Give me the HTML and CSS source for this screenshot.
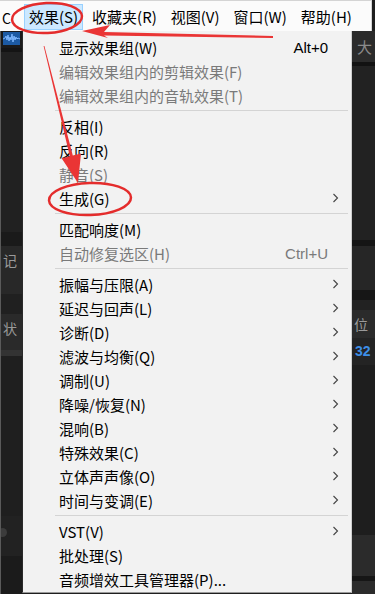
FILE: index.html
```html
<!DOCTYPE html>
<html lang="zh">

<head>
    <meta charset="UTF-8">
    <meta name="viewport" content="width=device-width, initial-scale=1.0">
    <title>效果菜单</title>
    <link rel="stylesheet" href="styles.css">
</head>

<body>
    <div class="app">
        <div class="menubar">
            <span class="bar-stub">C</span>
            <span class="bar-item active">效果(S)</span>
            <span class="bar-item">收藏夹(R)</span>
            <span class="bar-item">视图(V)</span>
            <span class="bar-item">窗口(W)</span>
            <span class="bar-item">帮助(H)</span>
        </div>

        <div class="workspace">
            <div class="side side-left">
                <div class="band band-icon">
                    <svg class="wave" width="17" height="13" viewBox="0 0 17 13">
                        <rect width="17" height="13" fill="#1c5aa3" />
                        <polyline points="0,7 2,6 3,4 4,8 5,3 6,9 7,5 8,8 9,2 10,10 11,4 12,8 13,5 14,7 15,6 17,7"
                            fill="none" stroke="#7fb8ff" stroke-width="1" />
                    </svg>
                </div>
                <div class="band" style="height:4px;background:#141414"></div>
                <div class="band" style="height:180px;background:#212121"></div>
                <div class="band" style="height:14px;background:#1a1a1a"></div>
                <div class="band band-text" style="height:48px;background:#282828">记</div>
                <div class="band" style="height:20px;background:#202020"></div>
                <div class="band band-text" style="height:36px;background:#2a2a2a">状</div>
                <div class="band" style="height:6px;background:#333"></div>
                <div class="band" style="height:160px;background:#1f1f1f"></div>
                <div class="band band-dot" style="height:40px;background:#222"><span class="dot"></span></div>
                <div class="band" style="height:60px;background:#1b1b1b"></div>
            </div>

            <div class="dropdown">
                <div class="item"><span class="label">显示效果组(W)</span><span class="key">Alt+0</span><span class="arrow"></span></div>
                <div class="item disabled"><span class="label">编辑效果组内的剪辑效果(F)</span><span class="arrow"></span></div>
                <div class="item disabled"><span class="label">编辑效果组内的音轨效果(T)</span><span class="arrow"></span></div>
                <div class="sep"></div>
                <div class="item"><span class="label">反相(I)</span><span class="arrow"></span></div>
                <div class="item"><span class="label">反向(R)</span><span class="arrow"></span></div>
                <div class="item disabled"><span class="label">静音(S)</span><span class="arrow"></span></div>
                <div class="item sub"><span class="label">生成(G)</span><span class="arrow"><svg width="6" height="10" viewBox="0 0 6 10"><polyline points="0.5,1 4.5,5 0.5,9" /></svg></span></div>
                <div class="sep"></div>
                <div class="item"><span class="label">匹配响度(M)</span><span class="arrow"></span></div>
                <div class="item disabled"><span class="label">自动修复选区(H)</span><span class="key">Ctrl+U</span><span class="arrow"></span></div>
                <div class="sep"></div>
                <div class="item sub"><span class="label">振幅与压限(A)</span><span class="arrow"><svg width="6" height="10" viewBox="0 0 6 10"><polyline points="0.5,1 4.5,5 0.5,9" /></svg></span></div>
                <div class="item sub"><span class="label">延迟与回声(L)</span><span class="arrow"><svg width="6" height="10" viewBox="0 0 6 10"><polyline points="0.5,1 4.5,5 0.5,9" /></svg></span></div>
                <div class="item sub"><span class="label">诊断(D)</span><span class="arrow"><svg width="6" height="10" viewBox="0 0 6 10"><polyline points="0.5,1 4.5,5 0.5,9" /></svg></span></div>
                <div class="item sub"><span class="label">滤波与均衡(Q)</span><span class="arrow"><svg width="6" height="10" viewBox="0 0 6 10"><polyline points="0.5,1 4.5,5 0.5,9" /></svg></span></div>
                <div class="item sub"><span class="label">调制(U)</span><span class="arrow"><svg width="6" height="10" viewBox="0 0 6 10"><polyline points="0.5,1 4.5,5 0.5,9" /></svg></span></div>
                <div class="item sub"><span class="label">降噪/恢复(N)</span><span class="arrow"><svg width="6" height="10" viewBox="0 0 6 10"><polyline points="0.5,1 4.5,5 0.5,9" /></svg></span></div>
                <div class="item sub"><span class="label">混响(B)</span><span class="arrow"><svg width="6" height="10" viewBox="0 0 6 10"><polyline points="0.5,1 4.5,5 0.5,9" /></svg></span></div>
                <div class="item sub"><span class="label">特殊效果(C)</span><span class="arrow"><svg width="6" height="10" viewBox="0 0 6 10"><polyline points="0.5,1 4.5,5 0.5,9" /></svg></span></div>
                <div class="item sub"><span class="label">立体声声像(O)</span><span class="arrow"><svg width="6" height="10" viewBox="0 0 6 10"><polyline points="0.5,1 4.5,5 0.5,9" /></svg></span></div>
                <div class="item sub"><span class="label">时间与变调(E)</span><span class="arrow"><svg width="6" height="10" viewBox="0 0 6 10"><polyline points="0.5,1 4.5,5 0.5,9" /></svg></span></div>
                <div class="sep"></div>
                <div class="item sub"><span class="label">VST(V)</span><span class="arrow"><svg width="6" height="10" viewBox="0 0 6 10"><polyline points="0.5,1 4.5,5 0.5,9" /></svg></span></div>
                <div class="item"><span class="label">批处理(S)</span><span class="arrow"></span></div>
                <div class="item"><span class="label">音频增效工具管理器(P)...</span><span class="arrow"></span></div>
            </div>

            <div class="side side-right">
                <div class="band band-glyph" style="height:31px;background:#2b2b2b">大</div>
                <div class="band" style="height:4px;background:#121212"></div>
                <div class="band" style="height:174px;background:#222"></div>
                <div class="band" style="height:6px;background:#151515"></div>
                <div class="band" style="height:44px;background:#262626"></div>
                <div class="band" style="height:10px;background:#161616"></div>
                <div class="band" style="height:10px;background:#222"></div>
                <div class="band band-text" style="height:28px;background:#2b2b2b">位</div>
                <div class="band band-num" style="height:27px;background:#242424">32</div>
                <div class="band" style="height:170px;background:#1e1e1e"></div>
                <div class="band" style="height:41px;background:#2b2b2b"></div>
                <div class="band" style="height:5px;background:#161616"></div>
                <div class="band" style="height:20px;background:#2b2b2b"></div>
            </div>
        </div>

        <!-- 红色标注 -->
        <svg class="annot" width="375" height="594" viewBox="0 0 375 594">
            <ellipse cx="47" cy="18" rx="35" ry="15" transform="rotate(-3 47 18)" />
            <ellipse cx="90" cy="199" rx="41" ry="16" transform="rotate(-2 90 199)" />
            <polygon class="arr" points="273,36 104,32 110,25 82,31 108,38 104,35.5 273,38" />
            <polygon class="arr" points="44.4,45.9 72.8,155.4 81,153.4 78,183 61.6,158.2 69.8,156.2 43.6,46.1" />
        </svg>
    </div>
</body>

</html>
```

FILE: styles.css
```css
body {
    margin: 0;
    padding: 0;
    background-color: #1e1e1e;
    font-family: "Noto Sans CJK SC", "Noto Sans", sans-serif;
}

.app {
    position: relative;
    width: 375px;
    height: 594px;
    overflow: hidden;
    display: flex;
    flex-direction: column;
}

.menubar {
    height: 30px;
    flex: none;
    display: flex;
    align-items: flex-end;
    gap: 4px;
    background-color: #fbfbfb;
    border-top: 1px solid #d4d4d4;
    border-right: 1px solid #d4d4d4;
    margin-right: 3px;
    font-size: 15px;
    color: #000;
}

.bar-stub {
    width: 18px;
    height: 26px;
    line-height: 26px;
    padding-left: 2px;
    font-size: 14px;
}

.bar-item {
    height: 24px;
    line-height: 24px;
    padding: 0 4px;
    border: 1px solid transparent;
    margin-bottom: 1px;
}

.bar-item.active {
    background-color: #cce8ff;
    border-color: #99d1ff;
}

.workspace {
    flex: 1;
    display: flex;
    min-height: 0;
}

.side {
    display: flex;
    flex-direction: column;
    overflow: hidden;
}

.side-left {
    width: 22px;
    border-left: 1px solid #5a5a5a;
    box-sizing: border-box;
}

.side-right {
    flex: 1;
}

.band {
    flex: none;
}

.band-icon {
    height: 16px;
    background-color: #1a1a1a;
    padding: 1px 0 0 2px;
}

.wave {
    display: block;
}

.band-text {
    color: #9a9a9a;
    font-size: 14px;
    line-height: 28px;
    white-space: nowrap;
    padding-left: 2px;
}

.band-glyph {
    color: #8a8a8a;
    font-size: 15px;
    line-height: 31px;
    padding-left: 5px;
}

.band-num {
    color: #3d8ee6;
    font-family: "Liberation Sans", sans-serif;
    font-weight: bold;
    font-size: 14px;
    line-height: 27px;
    padding-left: 3px;
}

.band-dot {
    padding-top: 12px;
    box-sizing: border-box;
}

.dot {
    display: block;
    width: 9px;
    height: 9px;
    margin-left: -3px;
    border-radius: 50%;
    background-color: #3c3c3c;
}

.dropdown {
    width: 330px;
    flex: none;
    box-sizing: border-box;
    height: 562px;
    padding-top: 4px;
    background-color: #f2f2f2;
    border-right: 1px solid #cfcfcf;
    border-bottom: 1px solid #9a9a9a;
    border-left: 1px solid #2a2a2a;
    font-size: 15px;
    color: #000;
}

.item {
    height: 24px;
    display: flex;
    align-items: center;
    padding: 0 11px 0 36px;
    white-space: nowrap;
}

.item .label {
    flex: 1;
}

.item .key {
    font-family: "Liberation Sans", sans-serif;
    font-size: 15px;
}

.item .arrow {
    width: 12px;
    display: flex;
    justify-content: flex-end;
    padding-right: 1px;
    box-sizing: border-box;
}

.item .arrow svg {
    display: block;
}

.item .arrow polyline {
    fill: none;
    stroke: #444;
    stroke-width: 1.1;
}

.item.disabled {
    color: #7a7a7a;
}

.sep {
    height: 1px;
    margin: 3px 3px 3px 32px;
    background-color: #d4d4d4;
}

.annot {
    position: absolute;
    left: 0;
    top: 0;
    pointer-events: none;
}

.annot ellipse {
    fill: none;
    stroke: #e42c2c;
    stroke-width: 2.5;
}

.annot .arr {
    fill: #ea3535;
}
```
